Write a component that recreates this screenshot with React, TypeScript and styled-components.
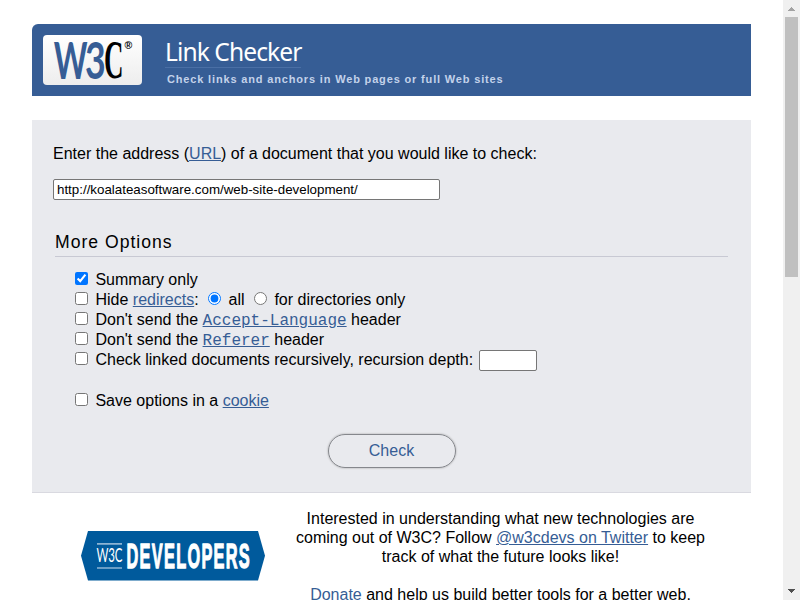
import React from "react";
import styled, { createGlobalStyle } from "styled-components";

const GlobalStyle = createGlobalStyle`
  html, body { margin: 0; height: 600px; overflow: hidden; background: #fff; }
  body { font-family: "Liberation Sans", Arial, sans-serif; font-size: 16px; color: #000; }
`;

const Page = styled.div`
  display: flex;
  height: 600px;
  overflow: hidden;
`;

const Content = styled.div`
  width: 719px;
  padding: 24px 32px 0;
  flex: none;
`;

const Banner = styled.header`
  display: flex;
  box-sizing: border-box;
  height: 72px;
  padding: 11px 0 0 11px;
  background: #365d95;
  border-top-left-radius: 6px;
`;

const LogoTile = styled.a`
  display: block;
  flex: none;
  width: 99px;
  height: 50px;
  border-radius: 4px;
  background: linear-gradient(#fff, #ededed);

  svg { display: block; overflow: visible; }
`;

const Titles = styled.div`
  margin-left: 23px;
`;

const Title = styled.h1`
  box-sizing: border-box;
  width: 136px;
  height: 33px;
  margin: 0;
  border-bottom: 1px solid #4a6fa5;
  font: 400 24.6px/34px "Noto Sans", "Open Sans", sans-serif;
  letter-spacing: -0.92px;
  white-space: nowrap;
  color: #fff;
`;

const Tagline = styled.p`
  margin: 4px 0 0 2px;
  font-size: 11px;
  font-weight: 700;
  line-height: 14px;
  letter-spacing: 0.84px;
  color: #c3d2ea;
  white-space: nowrap;
`;

const Form = styled.form`
  box-sizing: border-box;
  height: 373px;
  margin-top: 24px;
  padding: 24px 23px 0 21px;
  background: #e9eaee;
  border-bottom: 1px solid #d9d9e0;
`;

const Prompt = styled.label`
  display: block;
  line-height: 19px;
`;

const Link = styled.a<{ $plain?: boolean }>`
  color: #365d95;
  text-decoration: ${(p) => (p.$plain ? "none" : "underline")};
`;

const Field = styled.input<{ $width: number }>`
  box-sizing: border-box;
  width: ${(p) => p.$width}px;
  height: 21px;
  padding: 1px 3px;
  border: 1px solid #767676;
  border-radius: 2px;
  background: #fff;
  color: #000;
  font: 13.333px "Liberation Sans", Arial, sans-serif;
`;

const DepthField = styled(Field)`
  margin-left: 1px;
`;

const UrlRow = styled.div`
  display: flex;
  margin-top: 16px;
`;

const Legend = styled.h2`
  box-sizing: border-box;
  height: 25px;
  margin: 32px 0 0 2px;
  border-bottom: 1px solid #c8c9d3;
  font-size: 17.6px;
  font-weight: 400;
  line-height: 20px;
  letter-spacing: 1px;
`;

const Options = styled.div`
  padding: 12px 0 0 19px;
`;

const Option = styled.div<{ $gap?: number }>`
  height: 20px;
  line-height: 20px;
  margin-top: ${(p) => p.$gap ?? 0}px;
  white-space: nowrap;
`;

const Box = styled.input`
  width: 13px;
  height: 13px;
  margin: 3px 3px 3px 3px;
`;

const Radio = styled.input`
  width: 13px;
  height: 13px;
  margin: 3px 3px 0 5px;
`;

const Mono = styled.code`
  font-family: "Liberation Mono", "Courier New", monospace;
  font-size: 16px;
  line-height: 1;
`;

const Submit = styled.button`
  display: block;
  width: 128px;
  height: 34px;
  margin: 24px 0 0 275px;
  padding: 0 1px 0 0;
  border: 1px solid #85878c;
  border-radius: 17px;
  background: transparent;
  box-shadow: 0 0 2px #999;
  color: #365d95;
  font: 16px "Liberation Sans", Arial, sans-serif;
`;

const Footer = styled.footer`
  display: flex;
  padding: 16px 0 0 48px;
`;

const Badge = styled.a`
  margin-top: 21px;
  width: 186px;
  height: 52px;
`;

const Notes = styled.div`
  width: 430px;
  margin-left: 19.5px;
  text-align: center;
`;

const Note = styled.p`
  margin: 0 0 19px;
  line-height: 19px;
  white-space: nowrap;
`;

const Scrollbar = styled.div`
  display: flex;
  flex-direction: column;
  align-items: center;
  width: 17px;
  height: 600px;
  background: #f0f0f0;
`;

const Thumb = styled.div`
  width: 13px;
  height: 260px;
  margin-bottom: auto;
  background: #c0c0c0;
`;

const ArrowIcon = styled.svg`
  display: block;
`;

const Arrow = ({ down = false }: { down?: boolean }) => (
  <ArrowIcon width="17" height="17" shapeRendering="crispEdges">
    {down ? <path d="M5 6H12L8.5 10Z" fill="#505050" /> : <path d="M5 11H12L8.5 7Z" fill="#a3a3a3" />}
  </ArrowIcon>
);

const W3CLogo = () => (
  <svg width="99" height="50" viewBox="0 0 99 50">
    <g fill="#365d95" fontFamily="Lato, sans-serif" fontWeight="700">
      <text transform="translate(10.7 43.5) scale(.63 1)" fontSize="51">W</text>
      <text transform="translate(42 43.5) scale(.7 1)" fontSize="51">3</text>
    </g>
    <text transform="translate(61 43.2) scale(.5 1)" fontSize="54" fontFamily="Liberation Serif, serif" fontWeight="700">C</text>
    <text x="81.5" y="14" fontSize="10.5" fontFamily="Liberation Sans, sans-serif" fontWeight="700">®</text>
  </svg>
);

const DevelopersBadge = () => (
  <svg width="186" height="52" viewBox="0 0 186 52">
    <path d="M8 1H178L185 25.8L178 50.5H8L1 25.8Z" fill="#005a9c" />
    <path d="M17 13.8H42M17 38H42" stroke="#8cb4d3" strokeWidth="1.7" />
    <g fill="#fff">
      <text transform="translate(16.5 32.4) scale(.62 1)" fontFamily="Lato, sans-serif" fontSize="18.5" textLength="42" lengthAdjust="spacing">W3C</text>
      <text
        transform="translate(46.5 38) scale(.46 1)"
        fontFamily="Liberation Sans, sans-serif"
        fontWeight="700"
        fontSize="35.5"
        textLength="268"
        lengthAdjust="spacing"
        stroke="#fff"
        strokeWidth="1.3"
      >
        DEVELOPERS
      </text>
    </g>
  </svg>
);

export default function App() {
  return (
    <Page>
      <GlobalStyle />
      <Content>
        <Banner>
          <LogoTile><W3CLogo /></LogoTile>
          <Titles>
            <Title>Link Checker</Title>
            <Tagline>Check links and anchors in Web pages or full Web sites</Tagline>
          </Titles>
        </Banner>
        <Form>
          <Prompt>
            Enter the address (<Link href="#">URL</Link>) of a document that you would like to check:
          </Prompt>
          <UrlRow>
            <Field $width={387} defaultValue="http://koalateasoftware.com/web-site-development/" />
          </UrlRow>
          <Legend>More Options</Legend>
          <Options>
            <Option><Box type="checkbox" defaultChecked /> Summary only</Option>
            <Option>
              <Box type="checkbox" /> Hide <Link href="#">redirects</Link>:{" "}
              <Radio type="radio" name="scope" defaultChecked /> all{" "}
              <Radio type="radio" name="scope" /> for directories only
            </Option>
            <Option>
              <Box type="checkbox" /> Don't send the <Link href="#"><Mono>Accept-Language</Mono></Link> header
            </Option>
            <Option>
              <Box type="checkbox" /> Don't send the <Link href="#"><Mono>Referer</Mono></Link> header
            </Option>
            <Option>
              <Box type="checkbox" /> Check linked documents recursively, recursion depth: <DepthField $width={58} />
            </Option>
            <Option $gap={21}>
              <Box type="checkbox" /> Save options in a <Link href="#">cookie</Link>
            </Option>
          </Options>
          <Submit type="button">Check</Submit>
        </Form>
        <Footer>
          <Badge><DevelopersBadge /></Badge>
          <Notes>
            <Note>
              Interested in understanding what new technologies are<br />
              coming out of W3C? Follow <Link href="#">@w3cdevs on Twitter</Link> to keep<br />
              track of what the future looks like!
            </Note>
            <Note><Link href="#" $plain>Donate</Link> and help us build better tools for a better web.</Note>
          </Notes>
        </Footer>
      </Content>
      <Scrollbar>
        <Arrow />
        <Thumb />
        <Arrow down />
      </Scrollbar>
    </Page>
  );
}
